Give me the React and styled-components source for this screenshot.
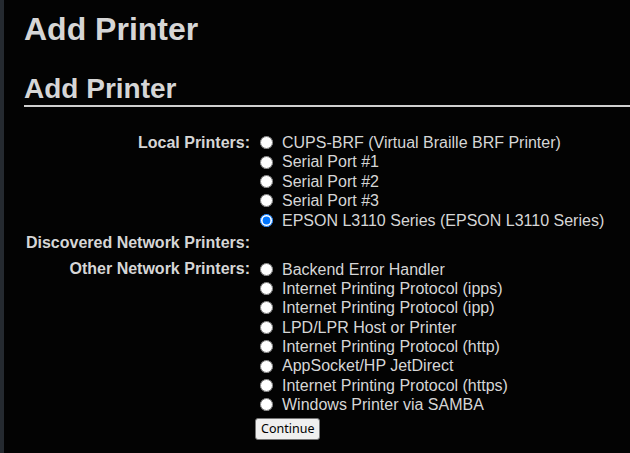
import React from "react";
import styled, { createGlobalStyle } from "styled-components";

const Global = createGlobalStyle`
  html, body { margin: 0; padding: 0; background: #030303; }
  body { font-family: "Liberation Sans", Arial, sans-serif; color: #d6d6d6; }
`;

const Page = styled.div`
  display: flex;
  min-height: 100vh;
`;

const Strip = styled.div`
  width: 4px;
  flex: none;
  background: #252a30;
`;

const Content = styled.main`
  flex: 1;
  padding: 11px 0 0 20px;
`;

const Title = styled.h1`
  margin: 0;
  font-size: 32px;
  line-height: 36px;
  font-weight: bold;
`;

const Section = styled.h2`
  margin: 25.7px 0 0;
  font-size: 28px;
  line-height: 32px;
  font-weight: bold;
  border-bottom: 2px solid #cfcfcf;
`;

const Form = styled.form`
  display: grid;
  grid-template-columns: 226px 1fr;
  column-gap: 5px;
  row-gap: 3.4px;
  margin-top: 26.4px;
`;

const Label = styled.div`
  padding-top: 0.6px;
  font-size: 16px;
  line-height: 18px;
  font-weight: bold;
  text-align: right;
  white-space: nowrap;
`;

const Options = styled.div`
  display: flex;
  flex-direction: column;
  min-height: ${(p) => p.$min || 0}px;
`;

const Option = styled.label`
  display: flex;
  align-items: center;
  height: 19.4px;
  font-size: 16px;
  line-height: 19.4px;
  white-space: nowrap;
`;

const Radio = styled.input.attrs({ type: "radio" })`
  width: 13px;
  height: 13px;
  margin: 0 9px 0 5px;
  flex: none;
  accent-color: #0075ff;
`;

const Button = styled.button`
  justify-self: start;
  height: 22px;
  padding: 1px 5px;
  font-family: "Noto Sans", "Open Sans", sans-serif;
  font-size: 12.5px;
  line-height: 18px;
  color: #000;
  background: #efefef;
  border: 1px solid #767676;
  border-radius: 3px;
`;

const local = [
  "CUPS-BRF (Virtual Braille BRF Printer)",
  "Serial Port #1",
  "Serial Port #2",
  "Serial Port #3",
  "EPSON L3110 Series (EPSON L3110 Series)",
];

const other = [
  "Backend Error Handler",
  "Internet Printing Protocol (ipps)",
  "Internet Printing Protocol (ipp)",
  "LPD/LPR Host or Printer",
  "Internet Printing Protocol (http)",
  "AppSocket/HP JetDirect",
  "Internet Printing Protocol (https)",
  "Windows Printer via SAMBA",
];

export default function App() {
  return (
    <>
      <Global />
      <Page>
        <Strip />
        <Content>
          <Title>Add Printer</Title>
          <Section>Add Printer</Section>
          <Form onSubmit={(e) => e.preventDefault()}>
            <Label>Local Printers:</Label>
            <Options>
              {local.map((t, i) => (
                <Option key={t}>
                  <Radio name="device" defaultChecked={i === 4} />
                  {t}
                </Option>
              ))}
            </Options>
            <Label>Discovered Network Printers:</Label>
            <Options $min={22.7} />
            <Label>Other Network Printers:</Label>
            <Options>
              {other.map((t) => (
                <Option key={t}>
                  <Radio name="device" />
                  {t}
                </Option>
              ))}
            </Options>
            <div />
            <Button type="submit">Continue</Button>
          </Form>
        </Content>
      </Page>
    </>
  );
}
